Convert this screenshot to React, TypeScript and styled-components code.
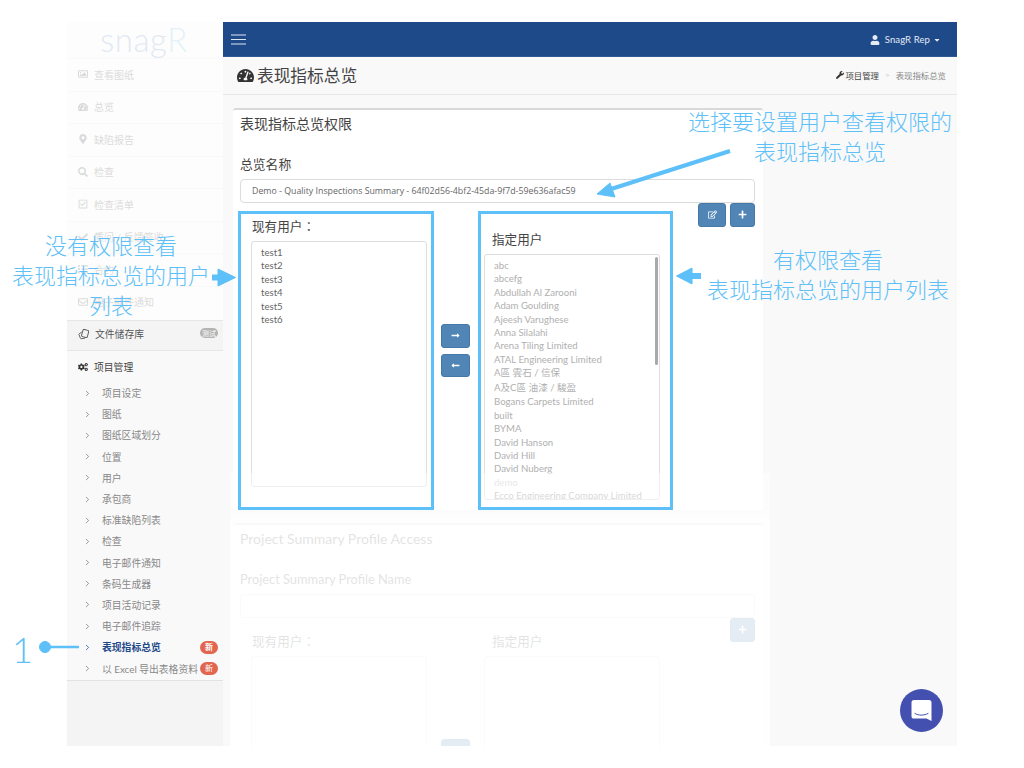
import React from 'react';
import styled, { createGlobalStyle } from 'styled-components';
import { ChevronRight } from 'lucide-react';
import {
  FaCaretDown,
  FaCheck,
  FaCogs,
  FaList,
  FaLongArrowAltLeft,
  FaLongArrowAltRight,
  FaMapMarkerAlt,
  FaPlus,
  FaRegCheckSquare,
  FaRegEdit,
  FaRegEnvelope,
  FaRegImage,
  FaSearch,
  FaTachometerAlt,
  FaUser,
  FaWrench,
} from 'react-icons/fa';

const BODY_FONT = `Lato, "Noto Sans CJK SC", sans-serif`;
const NOTE_BLUE = '#5dc0f8';

const GlobalStyle = createGlobalStyle`
  html, body {
    margin: 0;
    padding: 0;
    background: #fff;
  }
  * {
    box-sizing: border-box;
  }
`;

const Page = styled.div`
  position: relative;
  width: 1024px;
  height: 768px;
  overflow: hidden;
  padding: 22px 67px;
  font-family: ${BODY_FONT};
`;

const Frame = styled.div`
  display: flex;
  width: 890px;
  height: 724px;
  overflow: hidden;
`;

const Sidebar = styled.aside`
  width: 156px;
  flex-shrink: 0;
  background: #f4f4f4;
  display: flex;
  flex-direction: column;
`;

const FadedTop = styled.div`
  background: #fdfdfd;
  height: 298px;
`;

const FadedInner = styled.div`
  opacity: 0.2;
`;

const Logo = styled.div`
  height: 36px;
  text-align: center;
  padding-right: 2px;
  font-family: Lato, sans-serif;
  font-weight: 300;
  font-size: 33px;
  line-height: 34px;
  letter-spacing: 0.6px;
  color: #6f9ac8;
  span {
    color: #7fc4e8;
  }
`;

const FadedItem = styled.div`
  height: 32.5px;
  display: flex;
  align-items: center;
  gap: 6px;
  padding: 0 0 1px 11px;
  font-size: 10px;
  color: #555;
  border-top: 1px solid #ededed;
  svg {
    width: 10px;
    height: 10px;
    color: #555;
  }
`;

const StorageRow = styled.div`
  height: 31px;
  display: flex;
  align-items: center;
  gap: 6px;
  padding: 0 5px 3px 11px;
  font-size: 9.8px;
  color: #555;
  background: #f4f4f4;
  border-top: 1px solid #e6e6e6;
  border-bottom: 1px solid #e6e6e6;
`;

const Badge = styled.span<{ $tone: 'grey' | 'red' }>`
  margin-left: auto;
  flex-shrink: 0;
  align-self: center;
  width: 18px;
  height: ${(p) => (p.$tone === 'grey' ? '10px' : '13px')};
  margin-top: ${(p) => (p.$tone === 'grey' ? '-2px' : '0')};
  border-radius: 7px;
  background: ${(p) => (p.$tone === 'grey' ? '#b3b3b3' : '#e2654f')};
  color: #fff;
  font-size: ${(p) => (p.$tone === 'grey' ? '7px' : '8px')};
  line-height: ${(p) => (p.$tone === 'grey' ? '10px' : '13px')};
  text-align: center;
`;

const ProjectPanel = styled.div`
  background: #f9f9f9;
  border-bottom: 1px solid #e2e2e2;
  height: 330px;
  padding-top: 6px;
`;

const PanelHead = styled.div`
  height: 20px;
  display: flex;
  align-items: center;
  gap: 6px;
  padding-left: 11px;
  font-size: 9.8px;
  color: #444;
  svg {
    width: 10px;
    height: 10px;
    color: #333;
  }
`;

const SubList = styled.ul`
  list-style: none;
  margin: 5.500px 0 0;
  padding: 0;
`;

const SubItem = styled.li<{ $active?: boolean }>`
  height: 21.2px;
  display: flex;
  align-items: center;
  padding: 0 5px 0 16px;
  font-size: 9.8px;
  color: ${(p) => (p.$active ? '#1f4a8a' : '#888')};
  font-weight: ${(p) => (p.$active ? 700 : 400)};
  white-space: nowrap;
  svg {
    flex-shrink: 0;
    margin-right: 10px;
    color: ${(p) => (p.$active ? '#1f4a8a' : '#777')};
  }
`;

const Main = styled.main`
  position: relative;
  flex: 1;
  background: #f9f9f9;
  display: flex;
  flex-direction: column;
`;

const TopBar = styled.header`
  height: 35px;
  flex-shrink: 0;
  background: #1f4a8a;
  border-bottom: 1px solid #2f5a96;
  color: #fff;
  display: flex;
  align-items: center;
  justify-content: space-between;
  padding: 1px 17px 0 8px;
`;

const UserMenu = styled.div`
  display: flex;
  align-items: center;
  gap: 5px;
  font-size: 9.5px;
  letter-spacing: 0.1px;
  color: #e4ebf5;
  svg:last-child {
    width: 6px;
    height: 8px;
    margin-left: -1px;
  }
`;

const PageHead = styled.div`
  height: 38px;
  flex-shrink: 0;
  border-bottom: 1px solid #e8e8e8;
  display: flex;
  align-items: center;
  justify-content: space-between;
  padding: 0 11px 1px 14px;
`;

const PageTitle = styled.h1`
  margin: 0;
  display: flex;
  align-items: center;
  gap: 3px;
  font-size: 16.7px;
  font-weight: 400;
  color: #444;
  svg {
    color: #333;
  }
`;

const Crumbs = styled.div`
  display: flex;
  align-items: center;
  font-size: 8.4px;
  color: #888;
  svg {
    width: 8px;
    height: 8px;
    color: #333;
    margin-right: 1px;
  }
  b {
    font-weight: 400;
    color: #444;
  }
  i {
    font-style: normal;
    color: #ccc;
    margin: 0 6px;
  }
`;

const Content = styled.div`
  padding: 13px 194px 0 10px;
`;

const Card = styled.section<{ $tall: number }>`
  width: 530px;
  height: ${(p) => p.$tall}px;
  margin-bottom: 13px;
  background: #fff;
  border-top: 2px solid #d9d9d9;
  border-radius: 3px;
  padding: 5px 8px 0 7px;
`;

const CardTitle = styled.h2`
  margin: 0;
  font-size: 14px;
  line-height: 17px;
  font-weight: 400;
  color: #444;
`;

const FieldLabel = styled.div`
  margin-top: 24px;
  font-size: 12.8px;
  line-height: 17px;
  color: #444;
`;

const TextField = styled.div`
  margin-top: 6px;
  height: 24px;
  border: 1px solid #dcdcdc;
  border-radius: 4px;
  padding: 0 11px;
  font-family: "Open Sans", sans-serif;
  font-size: 8.8px;
  line-height: 22px;
  color: #666;
  white-space: nowrap;
`;

const TransferRow = styled.div`
  display: flex;
  align-items: flex-start;
  margin-left: -2px;
`;

const Column = styled.div<{ $width: number; $marked?: boolean }>`
  position: relative;
  width: ${(p) => p.$width}px;
  height: 299px;
  margin-top: 8px;
  flex-shrink: 0;
  &::after {
    content: '';
    position: absolute;
    inset: 0;
    z-index: 3;
    pointer-events: none;
    border: ${(p) => (p.$marked ? `3px solid ${NOTE_BLUE}` : '0')};
  }
`;

const ColumnLabel = styled.div<{ $drop?: number }>`
  margin-top: ${(p) => p.$drop ?? 8}px;
  padding-left: 14px;
  font-family: Lato, "Noto Sans CJK TC", sans-serif;
  font-size: 12.6px;
  line-height: 16px;
  color: #444;
`;

const ListBox = styled.div<{ $inset: number }>`
  position: relative;
  width: 176px;
  height: 246px;
  margin: 6px 0 0 ${(p) => p.$inset}px;
  border: 1px solid #dedede;
  border-radius: 3px;
  padding: 4px 9px;
  overflow: hidden;
  font-size: 9.6px;
  line-height: 13.4px;
  white-space: nowrap;
`;

const UserName = styled.div<{ $muted?: boolean; $ghost?: boolean; $cjk?: boolean }>`
  color: ${(p) => (p.$ghost ? '#d0d0d0' : p.$muted ? '#b0b0b0' : '#666')};
  line-height: ${(p) => (p.$cjk ? '14.6px' : '13.4px')};
`;

const ScrollThumb = styled.div`
  position: absolute;
  top: 2px;
  right: 1px;
  width: 3px;
  height: 108px;
  border-radius: 2px;
  background: #a9a9a9;
`;

const MoveButtons = styled.div`
  width: 44px;
  flex-shrink: 0;
  padding: 121px 0 0 7px;
  display: flex;
  flex-direction: column;
  gap: 6px;
`;

const ActionButtons = styled.div`
  flex: 1;
  display: flex;
  justify-content: flex-end;
  gap: 4px;
`;

const SquareButton = styled.button<{ $width: number }>`
  width: ${(p) => p.$width}px;
  height: 23.5px;
  padding: 0;
  display: flex;
  align-items: center;
  justify-content: center;
  background: #5085b6;
  border: 1px solid #4679a8;
  border-radius: 3px;
  color: #fff;
  svg {
    width: 9px;
    height: 9px;
  }
`;

const FadeVeil = styled.div`
  position: absolute;
  z-index: 2;
  left: 7px;
  top: 451px;
  width: 540px;
  bottom: 0;
  background: linear-gradient(
    rgba(255, 255, 255, 0.5) 0,
    rgba(255, 255, 255, 0.5) 40px,
    rgba(255, 255, 255, 0.85) 48px
  );
`;

const ChatBubble = styled.div`
  position: absolute;
  z-index: 4;
  left: 900px;
  top: 689px;
  width: 43px;
  height: 43px;
  border-radius: 50%;
  background: #4350af;
  display: flex;
  align-items: center;
  justify-content: center;
`;

const Note = styled.div<{ $x: number; $y: number; $w: number; $size?: number }>`
  position: absolute;
  z-index: 5;
  left: ${(p) => p.$x}px;
  top: ${(p) => p.$y}px;
  width: ${(p) => p.$w}px;
  font-family: "Noto Sans CJK SC", sans-serif;
  font-weight: 300;
  font-size: ${(p) => p.$size ?? 22}px;
  line-height: 30px;
  text-align: center;
  color: ${NOTE_BLUE};
  white-space: nowrap;
`;

const StepNumber = styled(Note)`
  font-family: Lato, sans-serif;
  text-align: left;
`;

const NoteArrows = styled.svg`
  position: absolute;
  z-index: 5;
  left: 0;
  top: 0;
  pointer-events: none;
`;

const fadedItems: [React.ReactNode, string][] = [
  [<FaRegImage key="a" />, '查看图纸'],
  [<FaTachometerAlt key="b" />, '总览'],
  [<FaMapMarkerAlt key="c" />, '缺陷报告'],
  [<FaSearch key="d" />, '检查'],
  [<FaRegCheckSquare key="e" />, '检查清单'],
  [<FaCheck key="f" />, '质问 / 反馈签收'],
  [<FaList key="g" />, '合约'],
  [<FaRegEnvelope key="h" />, '电子邮件通知'],
];

const projectLinks = [
  '项目设定',
  '图纸',
  '图纸区域划分',
  '位置',
  '用户',
  '承包商',
  '标准缺陷列表',
  '检查',
  '电子邮件通知',
  '条码生成器',
  '项目活动记录',
  '电子邮件追踪',
];

const assignedTop = [
  'abc',
  'abcefg',
  'Abdullah Al Zarooni',
  'Adam Goulding',
  'Ajeesh Varughese',
  'Anna Silalahi',
  'Arena Tiling Limited',
  'ATAL Engineering Limited',
];

const assignedRest = [
  'Bogans Carpets Limited',
  'built',
  'BYMA',
  'David Hanson',
  'David Hill',
  'David Nuberg',
];

const StorageIcon = () => (
  <svg width="11" height="11" viewBox="0 0 12 12" fill="none" stroke="#555" strokeWidth="1">
    <rect x="4.5" y="1" width="6.5" height="8" rx="1.5" transform="rotate(15 8 5)" />
    <path d="M4 3.5 1.5 5a1 1 0 0 0-.4 1.2L2.600 10a1 1 0 0 0 1.200.6L7.500 10" />
  </svg>
);

const MenuIcon = () => (
  <svg width="15" height="11" viewBox="0 0 15 11" stroke="#dfe7f2" strokeWidth="1.2">
    <path d="M0 1h15M0 5.500h15M0 10h15" />
  </svg>
);

const App: React.FC = () => {
  return (
    <Page>
      <GlobalStyle />
      <Frame>
        <Sidebar>
          <FadedTop>
            <FadedInner>
              <Logo>
                snag<span>R</span>
              </Logo>
              {fadedItems.map(([icon, label]) => (
                <FadedItem key={label}>
                  {icon}
                  {label}
                </FadedItem>
              ))}
            </FadedInner>
          </FadedTop>
          <StorageRow>
            <StorageIcon />
            文件储存库
            <Badge $tone="grey">测试</Badge>
          </StorageRow>
          <ProjectPanel>
            <PanelHead>
              <FaCogs />
              项目管理
            </PanelHead>
            <SubList>
              {projectLinks.map((link) => (
                <SubItem key={link}>
                  <ChevronRight size={9} strokeWidth={2} />
                  {link}
                </SubItem>
              ))}
              <SubItem $active>
                <ChevronRight size={9} strokeWidth={2} />
                表现指标总览
                <Badge $tone="red">新</Badge>
              </SubItem>
              <SubItem>
                <ChevronRight size={9} strokeWidth={2} />
                以 Excel 导出表格资料
                <Badge $tone="red">新</Badge>
              </SubItem>
            </SubList>
          </ProjectPanel>
        </Sidebar>
        <Main>
          <TopBar>
            <MenuIcon />
            <UserMenu>
              <FaUser size={10} />
              <span>SnagR Rep</span>
              <FaCaretDown />
            </UserMenu>
          </TopBar>
          <PageHead>
            <PageTitle>
              <FaTachometerAlt size={17} />
              表现指标总览
            </PageTitle>
            <Crumbs>
              <FaWrench />
              <b>项目管理</b>
              <i>&gt;</i>
              表现指标总览
            </Crumbs>
          </PageHead>
          <Content>
            <Card $tall={402}>
              <CardTitle>表现指标总览权限</CardTitle>
              <FieldLabel>总览名称</FieldLabel>
              <TextField>Demo - Quality Inspections Summary - 64f02d56-4bf2-45da-9f7d-59e636afac59</TextField>
              <TransferRow>
                <Column $width={196} $marked>
                  <ColumnLabel>现有用户：</ColumnLabel>
                  <ListBox $inset={13}>
                    {['test1', 'test2', 'test3', 'test4', 'test5', 'test6'].map((name) => (
                      <UserName key={name}>{name}</UserName>
                    ))}
                  </ListBox>
                </Column>
                <MoveButtons>
                  <SquareButton $width={29}>
                    <FaLongArrowAltRight />
                  </SquareButton>
                  <SquareButton $width={29}>
                    <FaLongArrowAltLeft />
                  </SquareButton>
                </MoveButtons>
                <Column $width={195} $marked>
                  <ColumnLabel $drop={21}>指定用户</ColumnLabel>
                  <ListBox $inset={6}>
                    <ScrollThumb />
                    {assignedTop.map((name) => (
                      <UserName key={name} $muted>
                        {name}
                      </UserName>
                    ))}
                    <UserName $muted $cjk>
                      A區 雲石 / 信保
                    </UserName>
                    <UserName $muted $cjk>
                      A及C區 油漆 / 駿盈
                    </UserName>
                    {assignedRest.map((name) => (
                      <UserName key={name} $muted>
                        {name}
                      </UserName>
                    ))}
                    <UserName $ghost>demo</UserName>
                    <UserName $muted>Ecco Engineering Company Limited</UserName>
                  </ListBox>
                </Column>
                <ActionButtons>
                  <SquareButton $width={28}>
                    <FaRegEdit />
                  </SquareButton>
                  <SquareButton $width={25}>
                    <FaPlus />
                  </SquareButton>
                </ActionButtons>
              </TransferRow>
            </Card>
            <Card $tall={300}>
              <CardTitle>Project Summary Profile Access</CardTitle>
              <FieldLabel>Project Summary Profile Name</FieldLabel>
              <TextField />
              <TransferRow>
                <Column $width={196}>
                  <ColumnLabel>现有用户：</ColumnLabel>
                  <ListBox $inset={13} />
                </Column>
                <MoveButtons>
                  <SquareButton $width={29}>
                    <FaLongArrowAltRight />
                  </SquareButton>
                </MoveButtons>
                <Column $width={195}>
                  <ColumnLabel>指定用户</ColumnLabel>
                  <ListBox $inset={6} />
                </Column>
                <ActionButtons>
                  <SquareButton $width={25}>
                    <FaPlus />
                  </SquareButton>
                </ActionButtons>
              </TransferRow>
            </Card>
          </Content>
          <FadeVeil />
        </Main>
      </Frame>
      <ChatBubble>
        <svg width="21" height="23" viewBox="0 0 21 23">
          <path d="M3 1h15a2.500 2.500 0 0 1 2.500 2.500V22l-5-2.400H3A2.500 2.500 0 0 1 .5 17V3.500A2.500 2.500 0 0 1 3 1z" fill="#fff" />
          <path d="M4 14.500c3.500 2.200 9 2.200 13 0" fill="none" stroke="#4350af" strokeWidth="1" strokeLinecap="round" />
        </svg>
      </ChatBubble>
      <Note $x={660} $y={105} $w={320}>
        选择要设置用户查看权限的
        <br />
        表现指标总览
      </Note>
      <Note $x={0} $y={229} $w={222}>
        没有权限查看
        <br />
        表现指标总览的用户
        <br />
        列表
      </Note>
      <Note $x={698} $y={243} $w={260}>
        有权限查看
        <br />
        表现指标总览的用户列表
      </Note>
      <StepNumber $x={12} $y={634} $w={24} $size={36}>
        1
      </StepNumber>
      <NoteArrows width="1024" height="768" viewBox="0 0 1024 768">
        <g fill={NOTE_BLUE} stroke={NOTE_BLUE}>
          <path d="M730 151 608 190" strokeWidth="4" fill="none" />
          <path d="M597 194 610 183 615 197Z" strokeWidth="1" />
          <path d="M212 277.500H222" strokeWidth="6" fill="none" />
          <path d="M235.500 277.500 218 269V286Z" strokeWidth="1" />
          <path d="M701 276H688" strokeWidth="6" fill="none" />
          <path d="M676.500 276 692 268V284Z" strokeWidth="1" />
          <circle cx="45" cy="647" r="5.500" strokeWidth="1" />
          <path d="M45 647H79" strokeWidth="2.500" fill="none" />
        </g>
      </NoteArrows>
    </Page>
  );
};

export default App;
